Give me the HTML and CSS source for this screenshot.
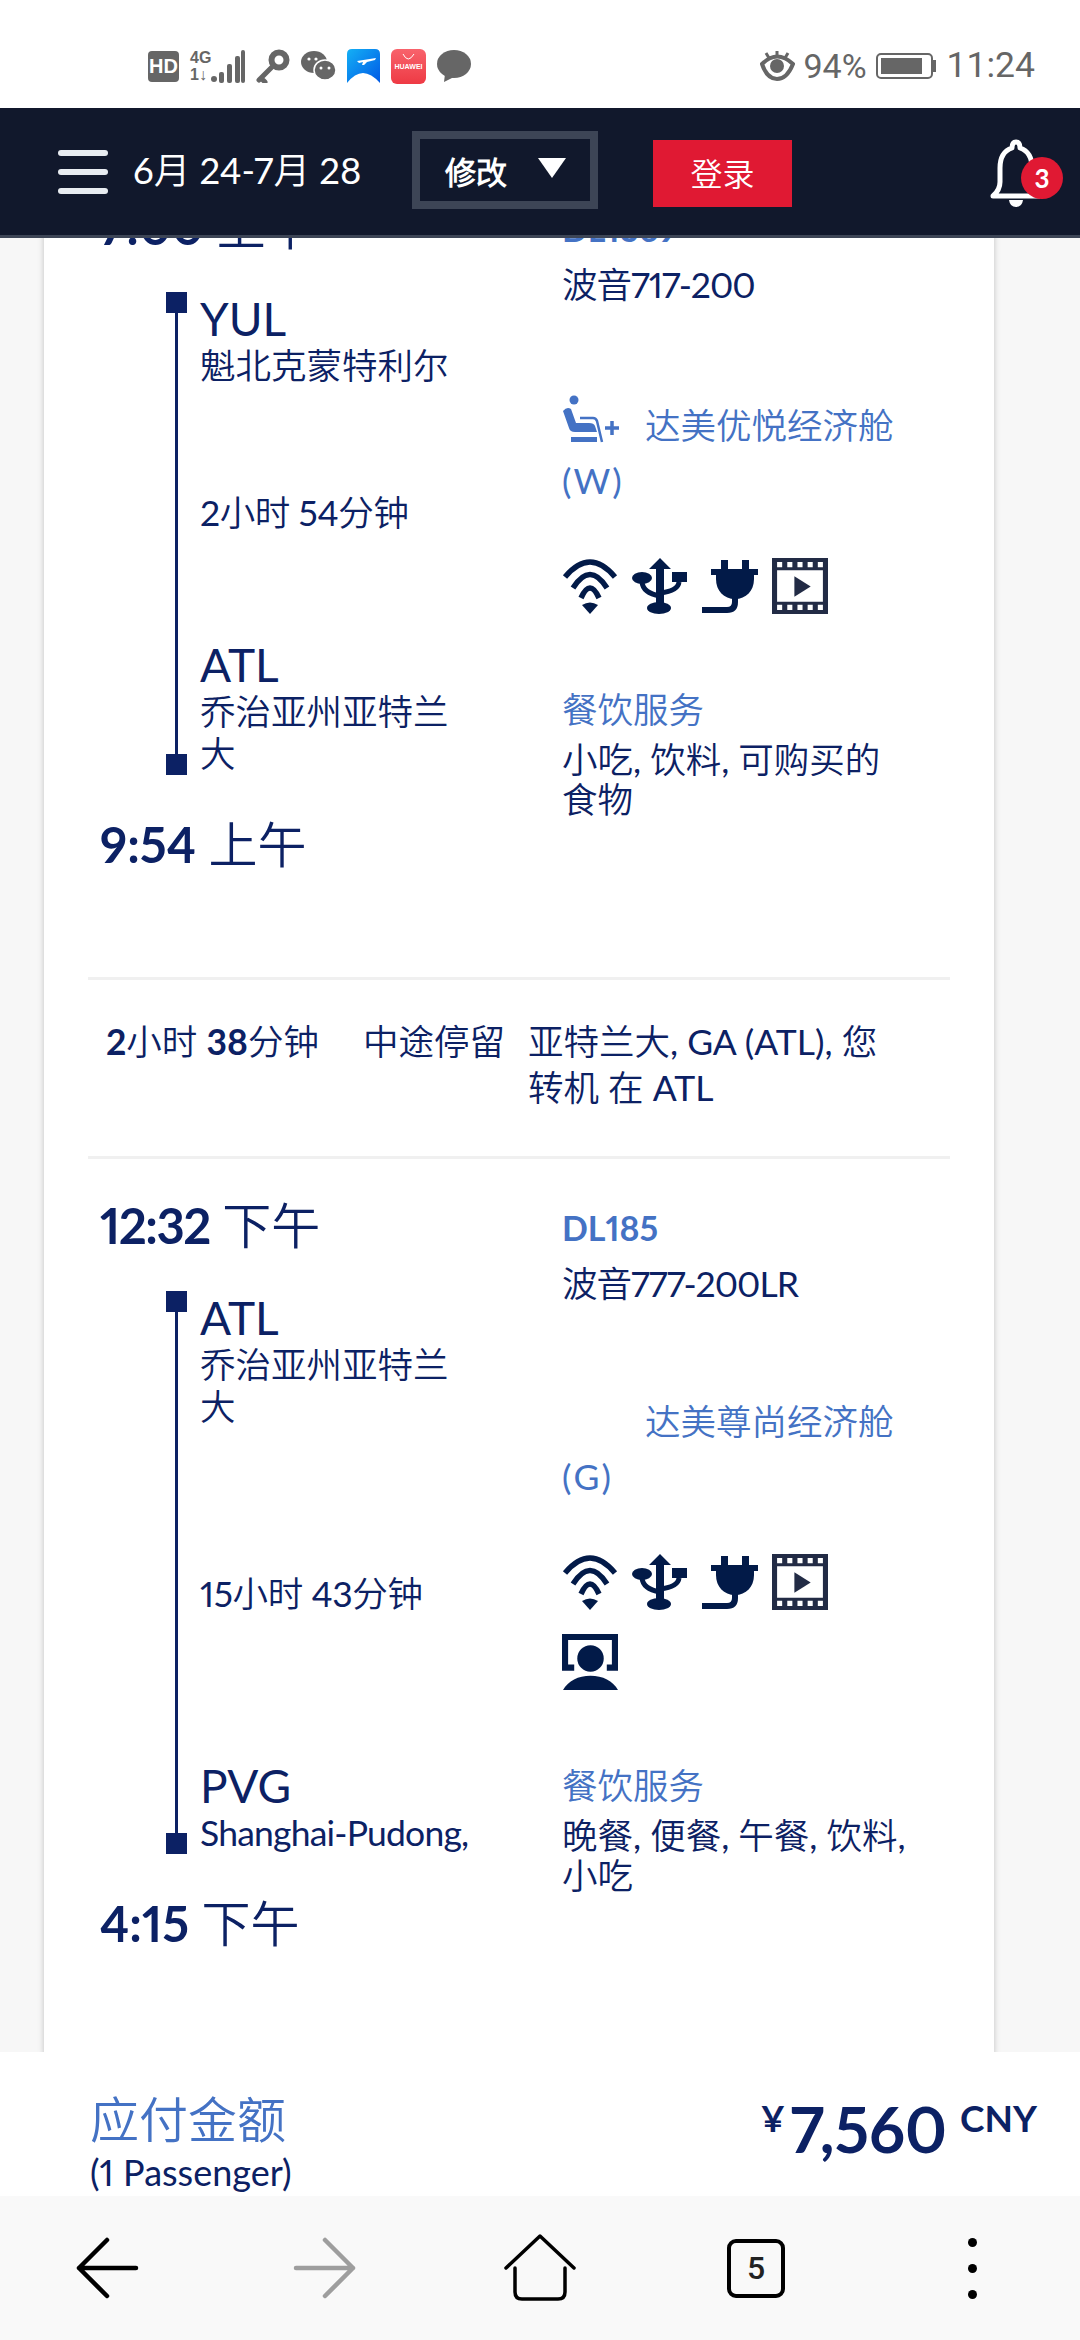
FILE: index.html
```html
<!DOCTYPE html>
<html lang="zh-CN">
<head>
<meta charset="utf-8">
<title>行程详情</title>
<link rel="stylesheet" href="styles.css">
</head>
<body>
<svg class="defs" width="0" height="0">
  <symbol id="i-wifi" viewBox="0 0 56 56">
    <g fill="none" stroke="#021a48" stroke-width="5.5">
      <path d="M3 19 Q28 -11 53 19"/>
      <path d="M11 30 Q28 3 45 30"/>
      <path d="M19 40 Q28 20 37 40"/>
    </g>
    <path fill="#021a48" d="M28 56 L20 47 Q28 42 36 47 Z"/>
  </symbol>
  <symbol id="i-usb" viewBox="0 0 56 56">
    <g fill="#021a48">
      <path d="M28 0 L39 11 H32 V50 H24 V11 H17 Z"/>
      <ellipse cx="27" cy="50" rx="12" ry="6"/>
      <ellipse cx="10" cy="20" rx="10" ry="6"/>
      <rect x="40" y="14" width="15" height="10"/>
    </g>
    <g fill="none" stroke="#021a48" stroke-width="5">
      <path d="M10 24 Q11 35 28 38"/>
      <path d="M47 24 Q46 33 28 35"/>
    </g>
  </symbol>
  <symbol id="i-plug" viewBox="0 0 56 56">
    <g fill="#021a48">
      <rect x="19" y="2" width="7" height="12"/>
      <rect x="40" y="2" width="7" height="12"/>
      <rect x="9" y="11" width="47" height="6"/>
      <path d="M14 17 H52 V21 C52 33 44 41 33 41 C22 41 14 33 14 21 Z"/>
    </g>
    <path fill="none" stroke="#021a48" stroke-width="6" d="M33 40 V44 Q33 52 25 52 H0"/>
  </symbol>
  <symbol id="i-film" viewBox="0 0 55 55">
    <path fill="#222b45" fill-rule="evenodd" d="M0 0 H55 V55 H0 Z M5 12 V43 H50 V12 Z M5 4 V9 H10 V4 Z M15 4 V9 H20 V4 Z M25 4 V9 H30 V4 Z M35 4 V9 H40 V4 Z M45 4 V9 H50 V4 Z M5 46 V51 H10 V46 Z M15 46 V51 H20 V46 Z M25 46 V51 H30 V46 Z M35 46 V51 H40 V46 Z M45 46 V51 H50 V46 Z"/>
    <path fill="#222b45" d="M22 18 L38 28 L22 38 Z"/>
  </symbol>
  <symbol id="i-screen" viewBox="0 0 55 55">
    <path fill="none" stroke="#021a48" stroke-width="6" d="M12 33 H3 V3 H52 V33 H44"/>
    <circle fill="#021a48" cx="28" cy="24" r="13"/>
    <path fill="#021a48" d="M1 55 C6 46 16 41 28 41 C40 41 50 46 55 55 Z"/>
  </symbol>
</svg>

<div class="phone">
  <div class="status">
    <div class="status-left">
      <span class="hd">HD</span>
      <span class="net">
        <span class="net-labels"><b>4G</b><b>1↓</b></span>
        <svg width="34" height="33" viewBox="0 0 34 33"><g fill="#666"><circle cx="3" cy="29" r="3"/><rect x="8" y="22" width="5" height="11" rx="2"/><rect x="16" y="14" width="5" height="19" rx="2"/><rect x="24" y="6" width="5" height="27" rx="2"/><rect x="30" y="0" width="4" height="33" rx="2"/></g></svg>
      </span>
      <svg class="st-key" width="34" height="34" viewBox="0 0 34 34"><circle cx="23" cy="11" r="7.5" fill="none" stroke="#666" stroke-width="6"/><path fill="none" stroke="#666" stroke-width="5" stroke-linecap="round" d="M17 17 L3 31 M5 29 L9 33"/></svg>
      <svg class="st-chat" width="35" height="30" viewBox="0 0 35 30"><ellipse cx="13" cy="11" rx="13" ry="11" fill="#666"/><ellipse cx="24" cy="19" rx="11" ry="10" fill="#666" stroke="#fff" stroke-width="1.5"/><g fill="#fff"><circle cx="8" cy="8" r="1.6"/><circle cx="15" cy="8" r="1.6"/><circle cx="20" cy="17" r="1.5"/><circle cx="28" cy="17" r="1.5"/></g></svg>
      <svg class="st-app" width="33" height="34" viewBox="0 0 33 34"><defs><linearGradient id="blue" x1="0" y1="0" x2="1" y2="1"><stop offset="0" stop-color="#14b0f5"/><stop offset="1" stop-color="#0059e6"/></linearGradient></defs><path fill="url(#blue)" d="M5 0 H28 Q33 0 33 5 V34 Q24 24 16 24 Q8 24 0 34 V5 Q0 0 5 0 Z"/><path fill="#fff" d="M10 12 L29 9 L28 11 L20 13 L17 16 H15 L16 13 L12 14 Z"/></svg>
      <span class="st-huawei"><svg width="13" height="6" viewBox="0 0 13 6"><path fill="none" stroke="#fff" stroke-width="1" d="M1 0 Q6 10 12 0"/></svg><i>HUAWEI</i></span>
      <svg class="st-bubble" width="34" height="32" viewBox="0 0 34 32"><ellipse cx="17" cy="14" rx="17" ry="14" fill="#666"/><path fill="#666" d="M8 24 L7 32 L17 27 Z"/></svg>
    </div>
    <div class="status-right">
      <svg width="35" height="30" viewBox="0 0 35 30"><path fill="none" stroke="#666" stroke-width="4" d="M2 13 Q17 -2 33 13 Q27 28 17 28 Q7 28 2 13 Z"/><circle cx="17" cy="15" r="7" fill="#666"/><path stroke="#666" stroke-width="3" d="M17 0 V6 M6 2 L9 7 M28 2 L25 7"/></svg>
      <span class="pct">94%</span>
      <span class="battery"><span class="battery-fill"></span></span>
      <span class="clock">11:24</span>
    </div>
  </div>

  <header class="topbar">
    <div class="burger"><span></span><span></span><span></span></div>
    <div class="dates">6月 24-7月 28</div>
    <div class="modify">修改<span class="caret"></span></div>
    <div class="login">登录</div>
    <div class="bell">
      <svg width="52" height="70" viewBox="0 0 52 70"><path fill="none" stroke="#fff" stroke-width="5" stroke-linejoin="round" d="M26 4 Q30 4 30 10 Q42 14 42 30 V44 Q42 52 49 58 H3 Q10 52 10 44 V30 Q10 14 22 10 Q22 4 26 4 Z"/><path fill="#fff" d="M19 62 H33 Q32 69 26 69 Q20 69 19 62 Z"/></svg>
      <span class="badge">3</span>
    </div>
  </header>

  <main class="scroller">
    <div class="card">
      <section class="segment">
        <div class="seg-left">
          <div class="time"><b>7:00</b> 上午</div>
          <div class="route route-short">
            <div class="rail"><span class="dot"></span><span class="line"></span><span class="dot"></span></div>
            <div class="stops">
              <div class="stop"><div class="code">YUL</div><div class="city">魁北克蒙特利尔</div></div>
              <div class="duration">2小时 54分钟</div>
              <div class="stop"><div class="code">ATL</div><div class="city">乔治亚州亚特兰大</div></div>
            </div>
          </div>
          <div class="time time-end"><b>9:54</b> 上午</div>
        </div>
        <div class="seg-right">
          <div class="flight">DL1369</div>
          <div class="plane">波音717-200</div>
          <div class="cabin">
            <svg class="seat" width="58" height="50" viewBox="0 0 58 50"><circle cx="12" cy="5" r="4.5" fill="#4472c4"/><path fill="#4472c4" d="M1 16 Q5 11 9 14 L14 28 H27 Q32 28 33 31 L35 37 H13 Q8 37 7 33 Z"/><path fill="none" stroke="#4472c4" stroke-width="2.5" d="M18 23 H31 Q34 23 35 26 L40 47"/><rect x="9" y="42" width="26" height="5" fill="#4472c4"/><path stroke="#4472c4" stroke-width="3.5" d="M43 33 H57 M50 26 V40"/></svg>
            达美优悦经济舱 <span class="fare-class">(W)</span>
          </div>
          <div class="amenities">
            <svg class="am"><use href="#i-wifi"/></svg>
            <svg class="am"><use href="#i-usb"/></svg>
            <svg class="am"><use href="#i-plug"/></svg>
            <svg class="am"><use href="#i-film"/></svg>
          </div>
          <div class="meal-title">餐饮服务</div>
          <div class="meal">小吃, 饮料, 可购买的食物</div>
        </div>
      </section>

      <section class="layover">
        <div class="lay-time"><b>2</b>小时 <b>38</b>分钟</div>
        <div class="lay-label">中途停留</div>
        <div class="lay-place">亚特兰大, GA (ATL), 您转机 在 ATL</div>
      </section>

      <section class="segment">
        <div class="seg-left">
          <div class="time time-tight"><b>12:32</b> 下午</div>
          <div class="route route-long">
            <div class="rail"><span class="dot"></span><span class="line"></span><span class="dot"></span></div>
            <div class="stops">
              <div class="stop"><div class="code">ATL</div><div class="city">乔治亚州亚特兰大</div></div>
              <div class="duration">15小时 43分钟</div>
              <div class="stop"><div class="code">PVG</div><div class="city city-line">Shanghai-Pudong,</div></div>
            </div>
          </div>
          <div class="time time-end"><b>4:15</b> 下午</div>
        </div>
        <div class="seg-right">
          <div class="flight">DL185</div>
          <div class="plane">波音777-200LR</div>
          <div class="cabin">
            <span class="seat seat-blank"></span>
            达美尊尚经济舱 <span class="fare-class">(G)</span>
          </div>
          <div class="amenities">
            <svg class="am"><use href="#i-wifi"/></svg>
            <svg class="am"><use href="#i-usb"/></svg>
            <svg class="am"><use href="#i-plug"/></svg>
            <svg class="am"><use href="#i-film"/></svg>
            <svg class="am"><use href="#i-screen"/></svg>
          </div>
          <div class="meal-title">餐饮服务</div>
          <div class="meal">晚餐, 便餐, 午餐, 饮料, 小吃</div>
        </div>
      </section>
    </div>
  </main>

  <div class="fare">
    <div>
      <div class="fare-label">应付金额</div>
      <div class="fare-pax">(1 Passenger)</div>
    </div>
    <div class="fare-price"><span class="yen">¥</span><span class="amount">7,560</span><span class="cny">CNY</span></div>
  </div>

  <nav class="browser">
    <svg width="64" height="62" viewBox="0 0 64 62"><path fill="none" stroke="#000" stroke-width="4.5" stroke-linecap="round" stroke-linejoin="round" d="M31 3 L3 31 L31 59 M3 31 H60"/></svg>
    <svg width="64" height="62" viewBox="0 0 64 62"><path fill="none" stroke="#9e9e9e" stroke-width="4.5" stroke-linecap="round" stroke-linejoin="round" d="M33 3 L61 31 L33 59 M61 31 H4"/></svg>
    <svg width="72" height="68" viewBox="0 0 72 68"><path fill="none" stroke="#000" stroke-width="3.5" stroke-linecap="round" stroke-linejoin="round" d="M2 34 L36 2 L70 34 M11 34 V58 Q11 65 18 65 H54 Q61 65 61 58 V34"/></svg>
    <div class="tabs">5</div>
    <div class="more"><span></span><span></span><span></span></div>
  </nav>
</div>
</body>
</html>
```

FILE: styles.css
```css
* {
	box-sizing: border-box;
}
html, body {
	margin: 0;
	padding: 0;
}
body {
	font-family: Lato, "Noto Sans CJK SC DemiLight", "Noto Sans CJK SC", sans-serif;
	font-variant-numeric: proportional-nums;
	color: #0c2164;
	background: #fff;
}
b {
	font-weight: 700;
}
.defs {
	position: absolute;
}
.phone {
	width: 1080px;
	height: 2340px;
	display: flex;
	flex-direction: column;
	overflow: hidden;
}

/* status bar */
.status {
	height: 108px;
	flex: none;
	display: flex;
	align-items: center;
	justify-content: space-between;
	padding: 24px 45px 0 148px;
	background: #fff;
	color: #666;
}
.status-left, .status-right {
	display: flex;
	align-items: center;
}
.status-left {
	gap: 11px;
}
.hd {
	width: 31px;
	height: 31px;
	border-radius: 4px;
	background: #666;
	color: #fff;
	font: 700 20px/31px "Liberation Sans", sans-serif;
	text-align: center;
}
.net {
	display: flex;
	align-items: flex-end;
	gap: 1px;
}
.net-labels {
	display: flex;
	flex-direction: column;
	width: 20px;
	font: 700 16px/17px "Liberation Sans", sans-serif;
}
.net-labels b {
	display: block;
}
.st-huawei {
	width: 35px;
	height: 35px;
	border-radius: 6px;
	background: linear-gradient(#f8636c, #ee3a44);
	display: flex;
	flex-direction: column;
	align-items: center;
	gap: 2px;
	padding-top: 5px;
}
.st-huawei svg {
	display: block;
}
.st-huawei i {
	font: normal 700 7px/10px "Liberation Sans", sans-serif;
	color: #fff;
}
.pct {
	font: 400 34px/1 Roboto, sans-serif;
	margin: 0 9px 0 8px;
}
.battery {
	width: 57px;
	height: 26px;
	border: 2px solid #666;
	border-radius: 5px;
	padding: 3px;
	margin-right: 14px;
	position: relative;
}
.battery-fill {
	display: block;
	height: 100%;
	width: 88%;
	background: #666;
}
.battery:after {
	content: "";
	position: absolute;
	right: -5px;
	top: 5px;
	width: 3px;
	height: 12px;
	background: #666;
}
.clock {
	font: 400 35.5px/1 Roboto, sans-serif;
}

/* top navigation */
.topbar {
	height: 130px;
	flex: none;
	display: flex;
	align-items: center;
	padding: 0 17px 3px 58px;
	background: #11182c;
	border-bottom: 3px solid #3d4556;
	color: #fff;
	position: relative;
	z-index: 2;
}
.burger {
	width: 50px;
	margin-top: 4px;
	display: flex;
	flex-direction: column;
	gap: 13px;
}
.burger span {
	height: 6px;
	border-radius: 3px;
	background: #e8ecf1;
}
.dates {
	margin: -3px 0 0 25px;
	width: 279px;
	font-size: 36.5px;
	white-space: nowrap;
}
.modify {
	width: 186px;
	height: 78px;
	border: 8px solid #3d4556;
	display: flex;
	align-items: center;
	padding-left: 25px;
	font-size: 31px;
	font-weight: 700;
}
.caret {
	margin-left: 31px;
	margin-top: -5px;
	width: 0;
	height: 0;
	border-left: 14px solid transparent;
	border-right: 14px solid transparent;
	border-top: 20px solid #fff;
}
.login {
	margin: 6px 0 0 55px;
	width: 139px;
	height: 67px;
	background: #e01933;
	font-size: 32px;
	line-height: 67px;
	text-align: center;
}
.bell {
	margin: 6px 0 0 auto;
	width: 73px;
	height: 70px;
	position: relative;
}
.bell svg {
	display: block;
}
.badge {
	position: absolute;
	left: 31px;
	top: 19px;
	width: 42px;
	height: 42px;
	border-radius: 50%;
	background: #e01933;
	font-size: 26px;
	font-weight: 700;
	line-height: 42px;
	text-align: center;
}

/* scrolled itinerary */
.scroller {
	flex: 1;
	min-height: 0;
	overflow: hidden;
	background: #f7f7f7;
}
.card {
	width: 950px;
	margin: -78px 0 0 44px;
	padding: 0 44px 0 44px;
	background: #fff;
	box-shadow: 0 0 6px rgba(0, 0, 0, 0.22);
}
.segment {
	display: flex;
	padding: 36px 0 103px 12px;
}
.seg-left {
	width: 462px;
	flex: none;
}
.seg-right {
	width: 348px;
	flex: none;
	padding-top: 8px;
}
.time {
	height: 60px;
	font-size: 49px;
	line-height: 60px;
	white-space: nowrap;
}
.time-tight b {
	letter-spacing: -1.5px;
}
.time-end {
	margin-top: 39px;
}
.route {
	display: flex;
	margin: 36px 0 0 66px;
}
.route-short {
	height: 483px;
}
.route-long {
	height: 563px;
}
.rail {
	width: 21px;
	flex: none;
	display: flex;
	flex-direction: column;
	align-items: center;
}
.dot {
	width: 21px;
	height: 21px;
	flex: none;
	background: #0c2164;
}
.line {
	width: 3px;
	flex: 1;
	background: #0c2164;
}
.stops {
	width: 252px;
	margin-left: 13px;
	padding-top: 1px;
	display: flex;
	flex-direction: column;
	justify-content: space-between;
}
.code {
	font-size: 46px;
	line-height: 52px;
}
.city {
	font-size: 35.5px;
	line-height: 42px;
}
.city-line {
	letter-spacing: -0.8px;
	white-space: nowrap;
}
.duration {
	font-size: 35.5px;
	letter-spacing: -0.4px;
	line-height: 42px;
	white-space: nowrap;
}
.flight {
	font-size: 34px;
	font-weight: 700;
	line-height: 50px;
	color: #4472c4;
}
.plane {
	font-size: 35.5px;
	letter-spacing: -1px;
	line-height: 50px;
	margin-top: 6px;
}
.cabin {
	margin-top: 85px;
	font-size: 35.5px;
	line-height: 55px;
	color: #4472c4;
}
.fare-class {
	letter-spacing: 2px;
}
.seat {
	display: inline-block;
	vertical-align: -6px;
	margin-right: 16px;
}
.seat-blank {
	width: 58px;
	height: 1px;
}
.amenities {
	margin-top: 50px;
	width: 320px;
	display: flex;
	flex-wrap: wrap;
	gap: 24px 14px;
}
.am {
	width: 56px;
	height: 56px;
}
.meal-title {
	margin-top: 71px;
	font-size: 35.5px;
	line-height: 50px;
	color: #4472c4;
}
.meal {
	font-size: 35.5px;
	line-height: 40px;
	margin-top: 5px;
}

/* connection row */
.layover {
	display: flex;
	padding: 39px 0 45px 18px;
	border-top: 3px solid #f0f0f0;
	border-bottom: 3px solid #f0f0f0;
	font-size: 35.5px;
	line-height: 46px;
}
.lay-time {
	width: 257px;
	flex: none;
	white-space: nowrap;
}
.lay-label {
	width: 165px;
	flex: none;
	white-space: nowrap;
}
.lay-place {
	width: 365px;
}

/* price strip */
.fare {
	height: 144px;
	flex: none;
	display: flex;
	justify-content: space-between;
	padding: 36px 43px 0 90px;
	background: #fff;
	position: relative;
}
.fare-label {
	font-size: 49px;
	line-height: 62px;
	color: #4472c4;
}
.fare-pax {
	font-size: 36px;
	line-height: 44px;
}
.fare-price {
	display: flex;
	align-items: flex-start;
	color: #0c2164;
	font-weight: 700;
}
.yen {
	font-size: 36px;
	line-height: 60px;
}
.amount {
	font-size: 63px;
	line-height: 82px;
	margin-left: 5px;
}
.cny {
	font-size: 37px;
	line-height: 60px;
	margin-left: 13px;
}

/* browser toolbar */
.browser {
	height: 144px;
	flex: none;
	display: grid;
	grid-template-columns: repeat(5, 216px);
	justify-items: center;
	align-items: center;
	background: #f9f9f9;
	padding-bottom: 0;
}
.tabs {
	width: 58px;
	height: 59px;
	border: 4px solid #000;
	border-radius: 9px;
	font: 500 32px/51px Roboto, sans-serif;
	text-align: center;
	color: #222;
}
.more {
	display: flex;
	flex-direction: column;
	gap: 17px;
}
.more span {
	width: 9px;
	height: 9px;
	border-radius: 50%;
	background: #000;
}
```
